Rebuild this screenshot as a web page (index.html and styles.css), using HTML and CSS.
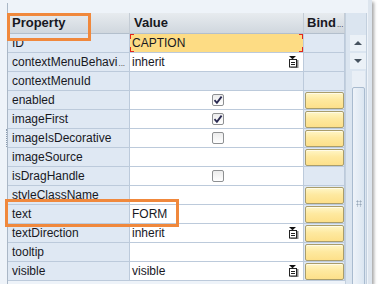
FILE: index.html
```html
<!DOCTYPE html>
<html lang="en">
<head>
    <meta charset="UTF-8">
    <meta name="viewport" content="width=device-width, initial-scale=1.0">
    <title>Properties</title>
    <link rel="stylesheet" href="styles.css">
</head>
<body>
    <div class="panel">
        <div class="frame">
            <div class="gutter"><span class="grip"></span></div>
            <div class="main">
                <div class="dots"></div>
                <div class="content">
                    <div class="grid">
                        <div class="hd">Property</div>
                        <div class="hd">Value</div>
                        <div class="hd hd-bind">Bind<small>...</small></div>

                        <div class="name">ID</div>
                        <div class="val sel">CAPTION</div>
                        <div class="bind"></div>

                        <div class="name">contextMenuBehavi<small>...</small></div>
                        <div class="val drop">inherit <svg class="ico" width="11" height="12" viewBox="0 0 11 12"><rect x="2.5" y="4" width="8" height="8" fill="#8a8a8a"/><rect x="1.5" y="3.5" width="7" height="7.5" fill="#fff" stroke="#222"/><path d="M3 6.5h4M3 8.5h4" stroke="#222"/><path d="M1 0h7L4.5 3.2z" fill="#111"/></svg></div>
                        <div class="bind"></div>

                        <div class="name">contextMenuId</div>
                        <div class="val empty"></div>
                        <div class="bind"></div>

                        <div class="name">enabled</div>
                        <div class="val center"><span class="chk"><svg width="10" height="10" viewBox="0 0 10 10"><path d="M1.5 5.2l2.4 2.6L8.6 1.6" fill="none" stroke="#2a2a52" stroke-width="1.8"/></svg></span></div>
                        <div class="bind"><span class="btn"></span></div>

                        <div class="name">imageFirst</div>
                        <div class="val center"><span class="chk"><svg width="10" height="10" viewBox="0 0 10 10"><path d="M1.5 5.2l2.4 2.6L8.6 1.6" fill="none" stroke="#2a2a52" stroke-width="1.8"/></svg></span></div>
                        <div class="bind"><span class="btn"></span></div>

                        <div class="name">imageIsDecorative</div>
                        <div class="val center"><span class="chk"></span></div>
                        <div class="bind"><span class="btn"></span></div>

                        <div class="name">imageSource</div>
                        <div class="val"></div>
                        <div class="bind"><span class="btn"></span></div>

                        <div class="name">isDragHandle</div>
                        <div class="val center"><span class="chk"></span></div>
                        <div class="bind"></div>

                        <div class="name">styleClassName</div>
                        <div class="val"></div>
                        <div class="bind"><span class="btn"></span></div>

                        <div class="name">text</div>
                        <div class="val">FORM</div>
                        <div class="bind"><span class="btn"></span></div>

                        <div class="name">textDirection</div>
                        <div class="val drop">inherit <svg class="ico" width="11" height="12" viewBox="0 0 11 12"><rect x="2.5" y="4" width="8" height="8" fill="#8a8a8a"/><rect x="1.5" y="3.5" width="7" height="7.5" fill="#fff" stroke="#222"/><path d="M3 6.5h4M3 8.5h4" stroke="#222"/><path d="M1 0h7L4.5 3.2z" fill="#111"/></svg></div>
                        <div class="bind"><span class="btn"></span></div>

                        <div class="name">tooltip</div>
                        <div class="val"></div>
                        <div class="bind"><span class="btn"></span></div>

                        <div class="name">visible</div>
                        <div class="val drop">visible <svg class="ico" width="11" height="12" viewBox="0 0 11 12"><rect x="2.5" y="4" width="8" height="8" fill="#8a8a8a"/><rect x="1.5" y="3.5" width="7" height="7.5" fill="#fff" stroke="#222"/><path d="M3 6.5h4M3 8.5h4" stroke="#222"/><path d="M1 0h7L4.5 3.2z" fill="#111"/></svg></div>
                        <div class="bind"><span class="btn"></span></div>

                        <div class="mark mark-head"></div>
                        <div class="mark mark-text"></div>
                    </div>

                    <div class="scroll">
                        <div class="arrow"><span class="tri-up"></span></div>
                        <div class="arrow"><span class="tri-down"></span></div>
                        <div class="track">
                            <div class="thumb"><span class="thumb-grip"></span></div>
                        </div>
                    </div>
                </div>
            </div>
        </div>
    </div>
</body>
</html>
```

FILE: styles.css
```css
*{
    margin: 0;
    padding: 0;
    box-sizing: border-box;
}
body{
    background-color: #fff;
    font-family: "Liberation Sans", Arial, sans-serif;
    font-size: 12px;
    color: #18181f;
}
.panel{
    width: 372px;
    height: 284px;
    padding-top: 3px;
    background-color: #eef3f9;
    border-right: 4px solid #dde5ee;
    box-shadow: 2px 2px 3px rgba(0, 0, 0, 0.35);
    overflow: hidden;
}
.frame{
    display: flex;
    height: 100%;
}
.gutter{
    width: 7px;
    display: flex;
    justify-content: flex-end;
}
.grip{
    margin-top: 126px;
    width: 0;
    height: 18px;
    border-left: 1px dotted #8c9cb0;
}
.main{
    flex: 1;
    border-left: 1px solid #aab7c6;
    padding-top: 9px;
    display: flex;
    flex-direction: column;
}
.dots{
    height: 2px;
    margin-bottom: 1px;
    background-image: repeating-linear-gradient(90deg, #333 0 1px, #f6dc50 1px 2px);
}
.content{
    flex: 1;
    display: flex;
}
/* property grid */
.grid{
    position: relative;
    display: grid;
    grid-template-columns: 122px 174px 41px;
    grid-template-rows: 21px;
    grid-auto-rows: 19px;
}
.grid > div{
    border-right: 1px solid #bccadb;
    border-bottom: 1px solid #bccadb;
    white-space: nowrap;
    overflow: hidden;
}
.hd{
    font-weight: bold;
    font-size: 13px;
    line-height: 20px;
    padding-left: 4px;
    background: linear-gradient(#e7ebef, #d0d7de);
    border-right-color: #c4ccd5 !important;
    border-bottom-color: #b3bfcc !important;
}
.hd-bind{
    padding-left: 3px;
}
.hd small,
.name small{
    font-size: 8px;
    font-weight: normal;
    margin-left: 1px;
}
.name{
    line-height: 18px;
    padding-left: 4px;
    background-color: #dfe8f3;
}
.val{
    line-height: 18px;
    padding-left: 2px;
    background-color: #fff;
}
.val.empty{
    background-color: #dfe8f3;
}
.val.sel{
    background:
        linear-gradient(#e4261c, #e4261c) left top / 1px 5px no-repeat,
        linear-gradient(#e4261c, #e4261c) left top / 4px 1px no-repeat,
        linear-gradient(#e4261c, #e4261c) left bottom / 1px 5px no-repeat,
        linear-gradient(#e4261c, #e4261c) left bottom / 4px 1px no-repeat,
        linear-gradient(#e4261c, #e4261c) right top / 1px 5px no-repeat,
        linear-gradient(#e4261c, #e4261c) right top / 4px 1px no-repeat,
        linear-gradient(#e4261c, #e4261c) right bottom / 1px 5px no-repeat,
        linear-gradient(#e4261c, #e4261c) right bottom / 4px 1px no-repeat,
        #fddc84;
}
.val.drop{
    display: flex;
    justify-content: space-between;
    align-items: center;
    padding-right: 4px;
}
.val.center{
    display: flex;
    justify-content: center;
    align-items: center;
}
.chk{
    width: 12px;
    height: 12px;
    border: 1px solid #8e9092;
    border-radius: 2px;
    background: linear-gradient(#ececec, #fff);
    display: flex;
    justify-content: center;
    align-items: center;
}
.bind{
    background-color: #dfe8f3;
    padding: 1px 0 0 1px;
}
.btn{
    display: block;
    width: 39px;
    height: 17px;
    border: 1px solid #a99d6b;
    border-radius: 2px;
    background: linear-gradient(#fff6c6, #fee9a0 45%, #fde08a);
    box-shadow: inset 0 1px 0 #fffbe6;
}
/* orange highlight boxes */
.grid > .mark{
    position: absolute;
    border: 3px solid #f0883c;
    background: none;
}
.mark-head{
    left: -1px;
    top: 0;
    width: 84px;
    height: 28px;
}
.mark-text{
    left: -3px;
    top: 186px;
    width: 174px;
    height: 28px;
}
/* scrollbar */
.scroll{
    width: 22px;
    margin-right: 1px;
    padding-top: 22px;
    background-color: #dbe5f0;
    border-left: 1px solid #c3d0de;
    border-right: 1px solid #c3d0de;
    overflow: hidden;
}
.arrow{
    width: 16px;
    height: 16px;
    margin: 0 0 2px 4px;
    background-color: #ebf1f7;
    display: flex;
    justify-content: center;
    align-items: center;
}
.tri-up{
    border-left: 4px solid transparent;
    border-right: 4px solid transparent;
    border-bottom: 4px solid #46535f;
}
.tri-down{
    border-left: 4px solid transparent;
    border-right: 4px solid transparent;
    border-top: 4px solid #46535f;
}
.track{
    margin-left: 6px;
    width: 13px;
    padding-top: 16px;
    background-color: #e9eff6;
}
.thumb{
    height: 232px;
    border: 1px solid #a9bbcf;
    border-radius: 2px;
    background: linear-gradient(90deg, #eef3f9, #dbe6f1);
    display: flex;
    justify-content: center;
    align-items: center;
}
.thumb-grip{
    width: 6px;
    height: 7px;
    background-image: radial-gradient(#9aaabb 45%, transparent 50%);
    background-size: 3px 3px;
}
```
